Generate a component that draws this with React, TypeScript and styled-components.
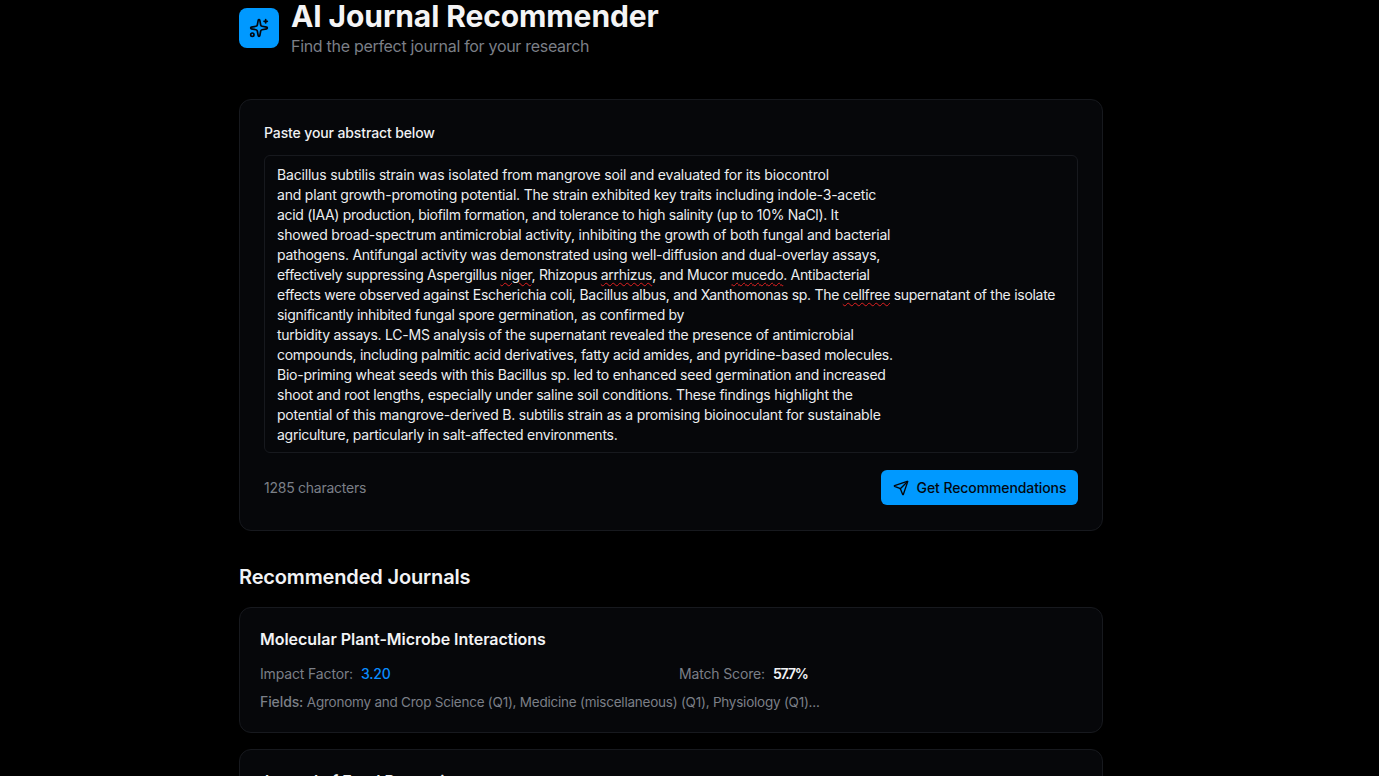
import { createGlobalStyle, styled } from "styled-components";
import { Sparkles, Send } from "lucide-react";

export default function App() {
  // track = letter-spacing per line, the original font is a little narrower on some glyph runs
  const abstractLines = [
    { track: -0.18, text: "Bacillus subtilis strain was isolated from mangrove soil and evaluated for its biocontrol" },
    { track: -0.2, text: "and plant growth-promoting potential. The strain exhibited key traits including indole-3-acetic" },
    { track: -0.32, text: "acid (IAA) production, biofilm formation, and tolerance to high salinity (up to 10% NaCl). It" },
    { track: -0.2, text: "showed broad-spectrum antimicrobial activity, inhibiting the growth of both fungal and bacterial" },
    { track: -0.255, text: "pathogens. Antifungal activity was demonstrated using well-diffusion and dual-overlay assays," },
    {
      track: -0.32,
      text: (
        <>
          effectively suppressing Aspergillus <Typo>niger</Typo>, Rhizopus <Typo>arrhizus</Typo>, and Mucor{" "}
          <Typo>mucedo</Typo>. Antibacterial
        </>
      ),
    },
    {
      track: -0.28,
      text: (
        <>
          effects were observed against Escherichia coli, Bacillus albus, and Xanthomonas sp. The{" "}
          <Typo>cellfree</Typo> supernatant of the isolate
        </>
      ),
    },
    { track: -0.27, text: "significantly inhibited fungal spore germination, as confirmed by" },
    { track: -0.245, text: "turbidity assays. LC-MS analysis of the supernatant revealed the presence of antimicrobial" },
    { track: -0.29, text: "compounds, including palmitic acid derivatives, fatty acid amides, and pyridine-based molecules." },
    { track: -0.23, text: "Bio-priming wheat seeds with this Bacillus sp. led to enhanced seed germination and increased" },
    { track: -0.245, text: "shoot and root lengths, especially under saline soil conditions. These findings highlight the" },
    { track: -0.2, text: "potential of this mangrove-derived B. subtilis strain as a promising bioinoculant for sustainable" },
    { track: -0.26, text: "agriculture, particularly in salt-affected environments." },
  ];

  return (
    <Page>
      <GlobalStyle />
      <Header>
        <LogoBox>
          <Sparkles size={20} strokeWidth={2} />
        </LogoBox>
        <div>
          <Title>AI Journal Recommender</Title>
          <Subtitle>Find the perfect journal for your research</Subtitle>
        </div>
      </Header>

      <FormCard>
        <FieldLabel>Paste your abstract below</FieldLabel>
        <AbstractBox>
          {abstractLines.map((line, i) => (
            <AbstractLine key={i} $track={line.track}>
              {line.text}
            </AbstractLine>
          ))}
        </AbstractBox>
        <FormFooter>
          <CharCount>1285 characters</CharCount>
          <SubmitButton>
            <Send size={16} strokeWidth={2} />
            Get Recommendations
          </SubmitButton>
        </FormFooter>
      </FormCard>

      <SectionTitle>Recommended Journals</SectionTitle>

      <ResultList>
        <ResultCard>
          <JournalName>Molecular Plant-Microbe Interactions</JournalName>
          <Stats>
            <div>
              <StatLabel>Impact Factor:</StatLabel>
              <ImpactValue>3.20</ImpactValue>
            </div>
            <div>
              <StatLabel>Match Score:</StatLabel>
              <ScoreValue>57.7%</ScoreValue>
            </div>
          </Stats>
          <Fields>
            <strong>Fields:</strong> Agronomy and Crop Science (Q1), Medicine (miscellaneous) (Q1), Physiology (Q1)...
          </Fields>
        </ResultCard>
        <ResultCard>
          <JournalName>Journal of Food Protection</JournalName>
        </ResultCard>
      </ResultList>
    </Page>
  );
}

const GlobalStyle = createGlobalStyle`
  html, body {
    margin: 0;
    height: 100%;
    overflow: hidden;
    background: #000;
  }
  body {
    font-family: Inter, "Liberation Sans", sans-serif;
    color: #f2f3f5;
  }
  * {
    box-sizing: border-box;
  }
`;
const Page = styled.div`
  width: 864px;
  margin-left: 239px;
  height: 776px;
  overflow: hidden;
`;
const Header = styled.header`
  display: flex;
  align-items: flex-start;
  gap: 12px;
  height: 99px;
`;
const LogoBox = styled.div`
  width: 40px;
  height: 40px;
  margin-top: 8px;
  border-radius: 8px;
  background: #0099ff;
  color: #03080f;
  display: flex;
  align-items: center;
  justify-content: center;
`;
const Title = styled.h1`
  margin: 0;
  font-size: 30px;
  line-height: 32px;
  font-weight: 700;
  letter-spacing: -0.1px;
  color: #f4f4f5;
`;
const Subtitle = styled.p`
  margin: 3px 0 0;
  font-size: 16px;
  line-height: 22px;
  letter-spacing: -0.3px;
  color: #7b7f87;
`;
const FormCard = styled.section`
  height: 432px;
  padding: 23px 24px 24px;
  border: 1px solid #17191e;
  border-radius: 12px;
  background: #06070a;
`;
const FieldLabel = styled.div`
  font-size: 14px;
  line-height: 20px;
  font-weight: 500;
  letter-spacing: -0.12px;
  color: #f0f1f3;
`;
const AbstractBox = styled.div`
  margin-top: 12px;
  height: 298px;
  padding: 9px 12px;
  border: 1px solid #17191e;
  border-radius: 6px;
  background: #06070a;
  font-size: 14px;
  line-height: 20px;
  color: #eceef0;
`;
const AbstractLine = styled.div<{ $track: number }>`
  white-space: nowrap;
  letter-spacing: ${(props) => props.$track}px;
`;
const Typo = styled.span`
  text-decoration: underline wavy #e02020 1px;
  text-underline-offset: 2px;
`;
const FormFooter = styled.div`
  display: flex;
  align-items: center;
  justify-content: space-between;
  margin-top: 17px;
`;
const CharCount = styled.span`
  font-size: 14px;
  letter-spacing: -0.25px;
  color: #7b7f87;
`;
const SubmitButton = styled.button`
  display: flex;
  align-items: center;
  justify-content: center;
  gap: 8px;
  height: 35px;
  width: 197px;
  border: none;
  border-radius: 6px;
  background: #0099ff;
  color: #03080f;
  font-family: inherit;
  font-size: 14px;
  font-weight: 500;
  letter-spacing: -0.1px;
`;
const SectionTitle = styled.h2`
  margin: 32px 0 16px;
  font-size: 20px;
  line-height: 28px;
  font-weight: 600;
  letter-spacing: -0.15px;
  color: #f2f3f5;
`;
const ResultList = styled.div`
  display: flex;
  flex-direction: column;
  gap: 16px;
`;
const ResultCard = styled.article`
  min-height: 126px;
  padding: 19px 20px 20px;
  border: 1px solid #17191e;
  border-radius: 12px;
  background: #06070a;
`;
const JournalName = styled.h3`
  margin: 0;
  font-size: 16px;
  line-height: 24px;
  font-weight: 600;
  letter-spacing: -0.03px;
  color: #f2f3f5;
`;
const Stats = styled.div`
  display: grid;
  grid-template-columns: 1fr 1fr;
  gap: 16px;
  margin-top: 13px;
  font-size: 14px;
  line-height: 20px;
  letter-spacing: -0.15px;
`;
const StatLabel = styled.span`
  color: #7b7f87;
  margin-right: 8px;
`;
const ImpactValue = styled.span`
  color: #0a8dff;
  font-weight: 500;
`;
const ScoreValue = styled.span`
  color: #f2f3f5;
  font-weight: 600;
  letter-spacing: -1.4px;
`;
const Fields = styled.div`
  margin-top: 8px;
  font-size: 13.5px;
  line-height: 20px;
  letter-spacing: -0.23px;
  color: #7b7f87;
  strong {
    font-weight: 500;
    font-size: 14px;
    letter-spacing: -0.1px;
  }
`;
